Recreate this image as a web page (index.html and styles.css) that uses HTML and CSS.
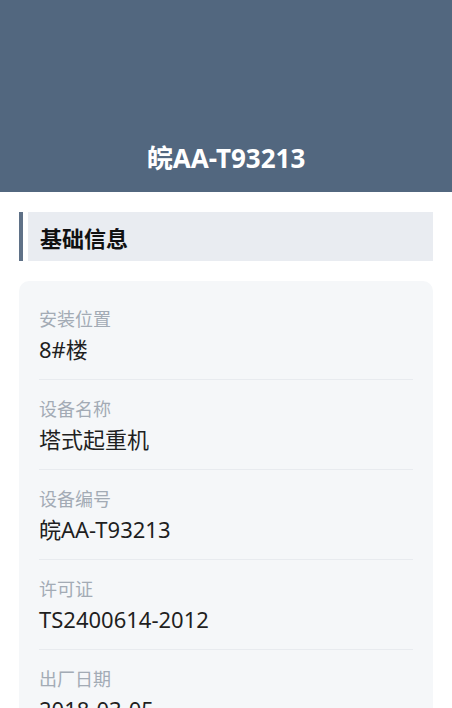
FILE: index.html
```html
<!DOCTYPE html>
<html lang="zh-CN">
<head>
<meta charset="utf-8">
<title>设备详情</title>
<link rel="stylesheet" href="styles.css">
</head>
<body>
<header class="hero">
  <h1 class="hero-title">皖AA-T93213</h1>
</header>
<main class="content">
  <div class="section-head">
    <span class="section-bar"></span>
    <h2 class="section-title">基础信息</h2>
  </div>
  <section class="card">
    <div class="item">
      <div class="label">安装位置</div>
      <div class="value">8#楼</div>
    </div>
    <div class="item">
      <div class="label">设备名称</div>
      <div class="value">塔式起重机</div>
    </div>
    <div class="item">
      <div class="label">设备编号</div>
      <div class="value">皖AA-T93213</div>
    </div>
    <div class="item">
      <div class="label">许可证</div>
      <div class="value">TS2400614-2012</div>
    </div>
    <div class="item">
      <div class="label">出厂日期</div>
      <div class="value">2018-03-05</div>
    </div>
  </section>
</main>
</body>
</html>
```

FILE: styles.css
```css
* { box-sizing: border-box; }
html, body {
  margin: 0;
  padding: 0;
  background: #ffffff;
  font-family: "Noto Sans", "Noto Sans CJK SC", sans-serif;
}
.hero {
  height: 192px;
  background: #52677f;
  display: flex;
  flex-direction: column;
  justify-content: flex-end;
  align-items: center;
  padding-bottom: 18px;
}
.hero-title {
  margin: 0;
  color: #ffffff;
  font-size: 26px;
  line-height: 32px;
  font-weight: 700;
}
.content {
  padding: 20px 19px 0;
}
.section-head {
  display: flex;
  height: 49px;
  gap: 5px;
}
.section-bar {
  width: 4px;
  background: #5f7187;
}
.section-title {
  flex: 1;
  margin: 0;
  background: #e9ecf1;
  display: flex;
  align-items: center;
  padding-left: 12px;
  font-size: 22px;
  font-weight: 700;
  color: #111111;
}
.card {
  margin-top: 20px;
  background: #f5f7f9;
  border-radius: 10px;
  padding: 9px 20px 0;
}
.item {
  padding: 16px 0;
  border-bottom: 1px solid #e8ebef;
}
.label {
  font-size: 18px;
  line-height: 26px;
  color: #a3abb5;
}
.value {
  margin-top: 4px;
  font-size: 22px;
  line-height: 27px;
  color: #1f1f1f;
}
```
